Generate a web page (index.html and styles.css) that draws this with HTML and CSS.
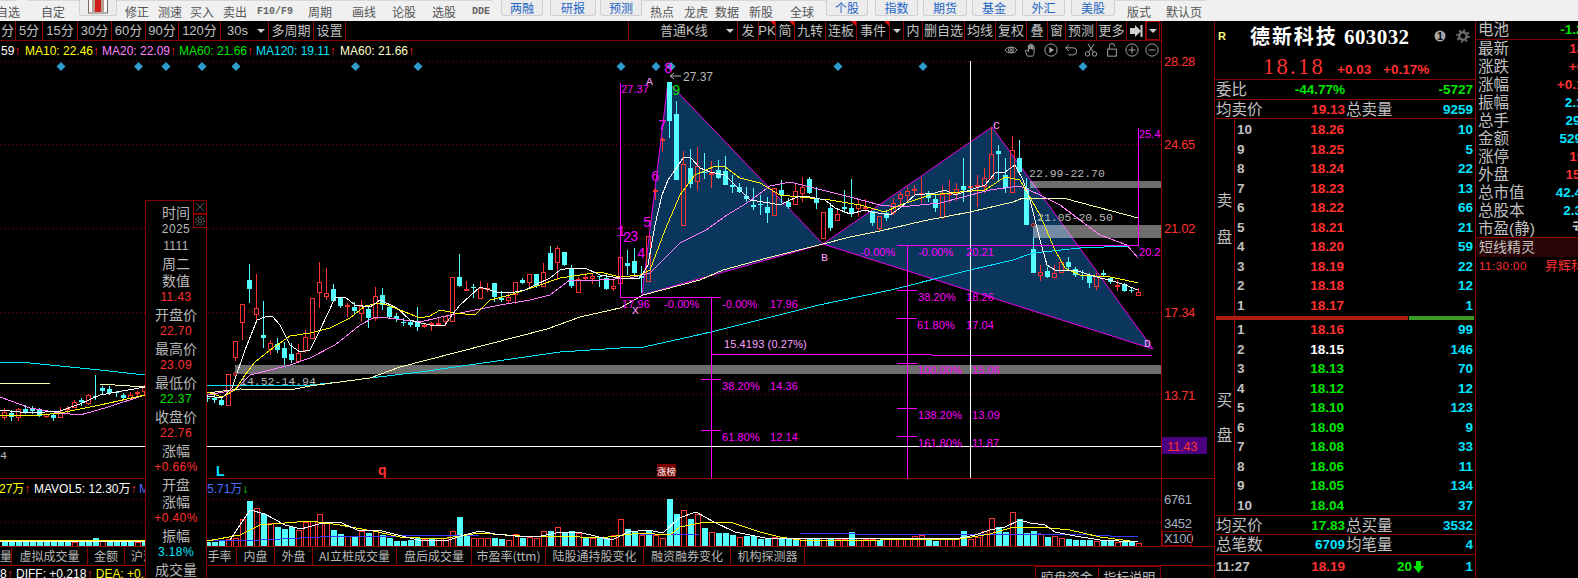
FILE: index.html
```html
<!DOCTYPE html>
<html lang="zh">
<head>
<meta charset="utf-8">
<title>德新科技 603032</title>
<link rel="stylesheet" href="styles.css">
</head>
<body>
<div class="app">
  <header class="topbar">
    <span class="ti">自选</span><i></i><span class="ti">自定</span>
    <span class="tb tb-icon"><svg width="20" height="14" viewBox="0 0 20 14"><rect x=".5" y="-2" width="19" height="15" fill="#fafafa" stroke="#7a6a60"/><rect x="4" y="-2" width="12" height="14" fill="#b8a090"/><rect x="7" y="-2" width="6" height="14" fill="#d0201c"/></svg></span>
    <span class="ti">修正</span><span class="ti">测速</span><span class="ti">买入</span><span class="ti">卖出</span><span class="ti ti-mono">F10/F9</span><span class="ti">周期</span><span class="ti">画线</span><span class="ti">论股</span><span class="ti">选股</span><span class="ti ti-mono">DDE</span><i></i>
    <span class="tb">两融</span><i></i><span class="tb">研报</span><i></i><span class="tb">预测</span>
    <span class="ti">热点</span><span class="ti">龙虎</span><span class="ti">数据</span><span class="ti">新股</span><span class="ti">全球</span>
    <span class="tb">个股</span><i></i><span class="tb">指数</span><i></i><span class="tb">期货</span><i></i><span class="tb">基金</span><i></i><span class="tb">外汇</span><i></i><span class="tb">美股</span>
    <span class="ti">版式</span><span class="ti">默认页</span>
  </header>

  <main class="main">
    <section class="chart">
      <nav class="periods">
        <span class="p">分</span><span class="p">5分</span><span class="p">15分</span><span class="p">30分</span><span class="p">60分</span><span class="p">90分</span><span class="p">120分</span>
        <span class="p p-drop">30s<b class="tri"></b></span><span class="p">多周期</span><span class="p">设置</span>
        <span class="p p-gap"></span>
        <span class="p p-drop p-kline">普通K线<b class="tri"></b></span>
        <span class="p">发</span><span class="p p-flag">PK</span><span class="p p-flag">简</span><span class="p">九转</span><span class="p p-flag">连板</span><span class="p p-flag">事件</span><span class="p"><b class="tri tri-solo"></b></span>
        <span class="p">内</span><span class="p">删自选</span><span class="p">均线</span><span class="p">复权</span><span class="p">叠</span><span class="p">窗</span><span class="p">预测</span><span class="p">更多</span>
        <span class="p"><svg width="14" height="12" viewBox="0 0 14 12"><path d="M1 3h5V0l6 6-6 6V9H1z" fill="#d0d0d0"/><rect x="11.5" y="0" width="2" height="12" fill="#d0d0d0"/></svg></span>
        <span class="p p-boxed"><b class="tri tri-solo"></b></span>
      </nav>

      <div class="legend">
        <div class="ma">
          <span class="c-white">59<b class="up">↑</b></span>
          <span class="c-yellow m1">MA10: 22.46<b class="up">↑</b></span>
          <span class="c-pink">MA20: 22.09<b class="up">↑</b></span>
          <span class="c-lime">MA60: 21.66<b class="up">↑</b></span>
          <span class="c-cyan">MA120: 19.11<b class="up">↑</b></span>
          <span class="c-cream">MA60: 21.66<b class="up">↑</b></span>
        </div>
        <div class="tools">
          <svg viewBox="0 0 16 16"><path d="M1 8c3-4.500 11-4.500 14 0-3 4.500-11 4.500-14 0z"/><circle cx="8" cy="8" r="2.800"/><circle cx="8" cy="8" r="1"/></svg>
          <svg viewBox="0 0 16 16"><path d="M4 15 1.500 9.500c-.5-1.500 1-2 2-.8L5 10V3c0-1.200 1.600-1.200 1.600 0v4V1.800c0-1.200 1.700-1.200 1.700 0V7 2.500c0-1.200 1.700-1.200 1.700 0V7.500 4c0-1.200 1.600-1.200 1.600 0v7c0 2-1 3-1.500 4z"/></svg>
          <svg viewBox="0 0 16 16"><circle cx="8" cy="8" r="7"/><path class="fill" d="M6 4.500 11.500 8 6 11.500z"/></svg>
          <svg viewBox="0 0 16 16"><path d="M5.500 2 2 5.500 5.500 9M2 5.500h8.500a4 4 0 0 1 0 8H5"/></svg>
          <svg viewBox="0 0 16 16"><circle cx="4" cy="12.500" r="2.500"/><circle cx="12" cy="12.500" r="2.500"/><path d="M5.300 10.500 11.500 1M10.700 10.500 4.500 1"/></svg>
          <svg viewBox="0 0 16 16"><rect x="3" y="7" width="10" height="8"/><path d="M5 7V3.500a3 3 0 0 1 6 0V4"/></svg>
          <svg viewBox="0 0 16 16"><circle cx="8" cy="8" r="7"/><path d="M4 8h8M8 4v8"/></svg>
          <svg viewBox="0 0 16 16"><circle cx="8" cy="8" r="7"/><path d="M4 8h8"/></svg>
        </div>
      </div>

      <svg class="plot" width="1214" height="485" viewBox="0 61 1214 485">
        <g id="grid"></g>
        <path class="pattern" d="M642 295 668 82 823 244ZM823 244 992 127 1153 349Z"/>
        <rect class="band" x="1030" y="181" width="131" height="7"/>
        <rect class="band" x="1033" y="225" width="128" height="13"/>
        <rect class="band" x="235" y="365" width="926" height="9"/>
        <g id="candles"></g>
        <g id="lines"></g>
        <path class="mag" d="M620.500 83V297.500H721M711.500 297V478M701 379.500H721M701 430.500H721M711 354.500H932M932 355.500H1152M907.500 245V478M897 245.500H1138V127.500M897 290.500H917M897 318.500H917M897 363.500H917M897 408.500H917M897 436.500H917"/>
        <path class="white" d="M970.500 61V478M0 446.500H1161"/>
        <path class="rule" d="M0 478.500H1214M1161.500 61V546"/>
        <rect class="now" x="1162" y="437" width="45" height="17"/>
        <g class="t-fib t-mag">
          <text x="621" y="93">27.37</text><text x="622" y="308">17.96</text><text x="664" y="308">-0.00%</text>
          <text x="722" y="308">-0.00%</text><text x="770" y="308">17.96</text>
          <text x="722" y="390">38.20%</text><text x="770" y="390">14.36</text>
          <text x="722" y="441">61.80%</text><text x="770" y="441">12.14</text>
          <text x="860" y="256">-0.00%</text><text x="918" y="256">-0.00%</text><text x="966" y="256">20.21</text>
          <text x="918" y="301">38.20%</text><text x="966" y="301">18.26</text>
          <text x="917" y="329">61.80%</text><text x="966" y="329">17.04</text>
          <text x="918" y="374">100.00%</text><text x="972" y="374">15.06</text>
          <text x="918" y="419">138.20%</text><text x="972" y="419">13.09</text>
          <text x="918" y="447">161.80%</text><text x="972" y="447">11.87</text>
          <text x="1139" y="138">25.4</text><text x="1139" y="256">20.2</text>
        </g>
        <g class="t-mono t-mag t-big">
          <text x="617" y="236">1</text><text x="623" y="242">2</text><text x="630" y="241">3</text><text x="637" y="258">4</text><text x="643" y="227">5</text><text x="651" y="181">6</text><text x="658" y="130">7</text><text x="664" y="73">8</text>
        </g>
        <text class="t-mono t-big t-green" x="672" y="95">9</text>
        <g class="t-mono t-pink">
          <text x="646" y="85">A</text><text x="821" y="261">B</text><text x="993" y="129">C</text><text x="1144" y="347">D</text><text x="632" y="314">X</text>
        </g>
        <text class="t-fib t-pink" x="724" y="348">15.4193 (0.27%)</text>
        <g class="t-mono t-grey">
          <text x="1029" y="177">22.99-22.70</text><text x="1037" y="221">21.05-20.50</text><text x="240" y="385">14.52-14.94</text><text x="0" y="459">4</text>
        </g>
        <path class="grey-line" d="M670 76H681M670 76l4-3M670 76l4 3"/>
        <text class="t-sans t-grey" x="683" y="81">27.37</text>
        <text class="t-letter t-cyan" x="216" y="476">L</text>
        <text class="t-letter t-red" x="378" y="475">q</text>
        <rect class="tag" x="657" y="464" width="19" height="13"/>
        <text class="t-tag" x="657" y="474.500">涨榜</text>
        <circle class="dot" cx="235" cy="374" r="1.500"/><circle class="dot" cx="1033" cy="225" r="1.500"/>
        <g class="t-axis t-red">
          <text x="1164" y="66">28.28</text><text x="1164" y="149">24.65</text><text x="1164" y="233">21.02</text><text x="1164" y="317">17.34</text><text x="1164" y="400">13.71</text><text x="1167" y="451">11.43</text>
        </g>
        <g class="t-axis t-steel">
          <text x="1164" y="504">6761</text><text x="1164" y="528">3452</text><text x="1164" y="543">X100</text>
        </g>
        <rect class="xbox" x="1162.500" y="531.500" width="29" height="14"/>
        <g class="t-sans">
          <text class="t-yellow" x="-1" y="493">27万<tspan class="t-red">↑</tspan></text>
          <text class="t-white" x="34" y="493">MAVOL5: 12.30万<tspan class="t-red">↑</tspan></text>
          <text class="t-blue" x="139" y="493">M</text>
          <text class="t-blue" x="207" y="493">5.71万<tspan class="t-green">↓</tspan></text>
        </g>
      </svg>

      <nav class="subtabs">
        <span>量</span><span>虚拟成交量</span><span>金额</span><span>沪深成交量</span><span>换手率</span><span>内盘</span><span>外盘</span><span>AI立桩成交量</span><span>盘后成交量</span><span>市盈率(ttm)</span><span>陆股通持股变化</span><span>融资融券变化</span><span>机构探测器</span>
      </nav>

      <div class="macd">
        <div class="macd-l"><span class="c-white">8<b class="up">↑</b> DIFF: +0.218<b class="up">↑</b></span> <span class="c-yellow">DEA: +0.1</span></div>
        <div class="macd-tabs"><span>晾盘资金</span><span>指标说明</span></div>
      </div>

      <aside class="tip">
        <span class="tip-x"><svg viewBox="0 0 13 13"><path d="M2 2 11 11M11 2 2 11"/></svg></span>
        <span class="tip-g"><svg viewBox="0 0 13 13"><circle cx="6.500" cy="6.500" r="2"/><circle class="dash" cx="6.500" cy="6.500" r="4.500"/></svg></span>
        <div>时间</div><div class="n">2025</div><div class="n">1111</div><div>周二</div><div>数值</div><div class="n c-red">11.43</div>
        <div>开盘价</div><div class="n c-red">22.70</div><div>最高价</div><div class="n c-red">23.09</div><div>最低价</div><div class="n c-lime">22.37</div>
        <div>收盘价</div><div class="n c-red">22.76</div><div>涨幅</div><div class="n c-red">+0.66%</div><div>开盘</div><div>涨幅</div><div class="n c-red">+0.40%</div>
        <div>振幅</div><div class="n c-cyan">3.18%</div><div>成交量</div>
      </aside>
    </section>

    <section class="quote">
      <div class="q-head">
        <div class="q-title">
          <b class="q-r">R</b><h1>德新科技 <em>603032</em></h1>
          <svg class="q-i" width="40" height="14" viewBox="0 0 40 14"><circle cx="6" cy="7" r="5.500" fill="#a8a8a8"/><text class="q-one" x="6" y="10.500">1</text><circle cx="29" cy="7" r="3.800" fill="none" stroke="#6a6a6a" stroke-width="2.600"/><circle cx="29" cy="7" r="5.800" fill="none" stroke="#6a6a6a" stroke-width="2" stroke-dasharray="2 2.500"/></svg>
        </div>
        <div class="q-price"><strong>18.18</strong><span>+0.03</span><span>+0.17%</span></div>
      </div>
      <div class="sum sum-a"><span class="lab">委比</span><span class="v c-lime">-44.77%</span><span></span><span class="v c-lime">-5727</span></div>
      <div class="sum sum-b"><span class="lab">均卖价</span><span class="v c-red">19.13</span><span class="lab">总卖量</span><span class="v c-cyan">9259</span></div>
      <div class="book book-sell">
        <div class="book-l"><span>卖</span><span>盘</span></div>
        <div class="levels">
          <div class="lv"><span class="g">10</span><span class="c-red">18.26</span><span class="c-cyan">10</span></div>
          <div class="lv"><span class="g">9</span><span class="c-red">18.25</span><span class="c-cyan">5</span></div>
          <div class="lv"><span class="g">8</span><span class="c-red">18.24</span><span class="c-cyan">22</span></div>
          <div class="lv"><span class="g">7</span><span class="c-red">18.23</span><span class="c-cyan">13</span></div>
          <div class="lv"><span class="g">6</span><span class="c-red">18.22</span><span class="c-cyan">66</span></div>
          <div class="lv"><span class="g">5</span><span class="c-red">18.21</span><span class="c-cyan">21</span></div>
          <div class="lv"><span class="g">4</span><span class="c-red">18.20</span><span class="c-cyan">59</span></div>
          <div class="lv"><span class="g">3</span><span class="c-red">18.19</span><span class="c-cyan">22</span></div>
          <div class="lv"><span class="g">2</span><span class="c-red">18.18</span><span class="c-cyan">12</span></div>
          <div class="lv"><span class="g">1</span><span class="c-red">18.17</span><span class="c-cyan">1</span></div>
        </div>
      </div>
      <div class="ratio"><span class="ratio-r"></span><span class="ratio-g"></span></div>
      <div class="book book-buy">
        <div class="book-l"><span>买</span><span>盘</span></div>
        <div class="levels">
          <div class="lv"><span class="g">1</span><span class="c-red">18.16</span><span class="c-cyan">99</span></div>
          <div class="lv"><span class="g">2</span><span class="c-white">18.15</span><span class="c-cyan">146</span></div>
          <div class="lv"><span class="g">3</span><span class="c-lime">18.13</span><span class="c-cyan">70</span></div>
          <div class="lv"><span class="g">4</span><span class="c-lime">18.12</span><span class="c-cyan">12</span></div>
          <div class="lv"><span class="g">5</span><span class="c-lime">18.10</span><span class="c-cyan">123</span></div>
          <div class="lv"><span class="g">6</span><span class="c-lime">18.09</span><span class="c-cyan">9</span></div>
          <div class="lv"><span class="g">7</span><span class="c-lime">18.08</span><span class="c-cyan">33</span></div>
          <div class="lv"><span class="g">8</span><span class="c-lime">18.06</span><span class="c-cyan">11</span></div>
          <div class="lv"><span class="g">9</span><span class="c-lime">18.05</span><span class="c-cyan">134</span></div>
          <div class="lv"><span class="g">10</span><span class="c-lime">18.04</span><span class="c-cyan">37</span></div>
        </div>
      </div>
      <div class="sum sum-b"><span class="lab">均买价</span><span class="v c-lime">17.83</span><span class="lab">总买量</span><span class="v c-cyan">3532</span></div>
      <div class="sum sum-c"><span class="lab">总笔数</span><span class="v c-cyan">6709</span><span class="lab">均笔量</span><span class="v c-cyan">4</span></div>
      <div class="tick">
        <span class="g">11:27</span><span class="c-red">18.19</span>
        <span class="c-lime tick-v">20<svg width="11" height="12" viewBox="0 0 11 12"><path d="M3 0h5v5h3l-5.500 7L0 5h3z" fill="#00e600"/></svg></span>
        <span class="c-cyan">1</span>
      </div>
    </section>

    <section class="side">
      <div class="s-top"><span class="lab">电池</span><span class="v c-lime">-1.23%</span></div>
      <div class="s-list">
        <div class="s-row"><span class="lab">最新</span><span class="v c-red">18.18</span></div>
        <div class="s-row"><span class="lab">涨跌</span><span class="v c-red">+0.03</span></div>
        <div class="s-row"><span class="lab">涨幅</span><span class="v c-red">+0.17%</span></div>
        <div class="s-row"><span class="lab">振幅</span><span class="v c-cyan">2.12%</span></div>
        <div class="s-row"><span class="lab">总手</span><span class="v c-cyan">29201</span></div>
        <div class="s-row"><span class="lab">金额</span><span class="v c-cyan">5291万</span></div>
        <div class="s-row"><span class="lab">涨停</span><span class="v c-red">19.97</span></div>
        <div class="s-row"><span class="lab">外盘</span><span class="v c-red">15120</span></div>
        <div class="s-row"><span class="lab">总市值</span><span class="v c-cyan">42.45亿</span></div>
        <div class="s-row"><span class="lab">总股本</span><span class="v c-cyan">2.33亿</span></div>
        <div class="s-row"><span class="lab">市盈(静)</span><span class="v g">亏损</span></div>
      </div>
      <div class="s-band">短线精灵</div>
      <div class="s-feed"><span>11:30:00</span><span>昇辉科技</span></div>
    </section>
  </main>
</div>
<script src="chart.js"></script>
</body>
</html>
```
FILE: styles.css
```css
* { box-sizing: border-box; }
html, body { margin: 0; padding: 0; background: #000; }
body {
  width: 1578px; height: 578px; overflow: hidden;
  font-family: "Noto Sans CJK SC", "Liberation Sans", sans-serif;
  color: #c0c0c0;
}
.app { width: 1578px; height: 578px; display: flex; flex-direction: column; }

/* top toolbar */
.topbar {
  height: 21px; flex: none; background: #f0f0f0;
  display: grid; align-items: start;
  grid-template-columns: 16px 11px 52px 38px 40px 26px 38px 28px 52px 38px 50px 30px 50px 24px 8px 42px 7px 46px 4px 42px 40px 28px 34px 34px 48px 42px 7px 43px 5px 44px 5px 44px 6px 43px 6px 44px 48px 42px;
}
.ti {
  height: 21px; display: flex; align-items: center; justify-content: center; white-space: nowrap;
  font-size: 12px; color: #555; padding-top: 2px; box-shadow: inset 0 1px #d8d8d8;
}
.ti-mono { font-family: "Liberation Mono", monospace; font-size: 10px; font-weight: bold; color: #666; }
.tb {
  height: 16px; display: flex; align-items: center; justify-content: center;
  font-size: 12px; color: #1e66c4;
  background: #ececec; border: 1px solid #cfcfcf; border-top: 0; border-radius: 0 0 3px 3px;
}
.tb-icon { overflow: hidden; align-items: flex-start; }

/* period bar */
.chart { width: 1214px; flex: none; position: relative; display: flex; flex-direction: column; height: 557px; }
.main { flex: 1; display: flex; min-height: 0; }
.periods {
  width: 1162px; height: 20px; flex: none; border-bottom: 1px solid #8b0000; border-right: 1px solid #8b0000;
  display: grid; align-items: stretch;
  grid-template-columns: 16px 27px 35px 34px 34px 33px 42px 48px 45px 32px 283px 109px 21px 17px 19px 31px 31px 33px 14px 19px 42px 31px 31px 21px 18px 31px 30px 19px 14px;
}
.p {
  position: relative; display: flex; align-items: center; justify-content: center; white-space: nowrap;
  border-right: 1px solid #8b0000; font-size: 13px; line-height: 1; color: #c0c0c0;
  font-family: "Liberation Sans", "Noto Sans CJK SC", sans-serif;
}
.p-drop { justify-content: flex-start; padding-left: 6px; }
.p-kline { padding-left: 31px; }
.tri {
  position: absolute; right: 3px; top: 8px; width: 0; height: 0;
  border: 4px solid transparent; border-top: 4px solid #d0d0d0; border-bottom: 0;
}
.tri-solo { position: static; }
.p-flag::after {
  content: ""; position: absolute; right: 0; top: 0; width: 0; height: 0;
  border-top: 5px solid #e01010; border-left: 5px solid transparent;
}
.p-boxed { border: 1px solid #a00000; }

/* legend */
.legend {
  width: 1162px; height: 20px; flex: none; border-right: 1px solid #8b0000;
  display: flex; align-items: center; justify-content: space-between;
}
.ma { display: flex; font: 12px/20px "Liberation Sans", sans-serif; white-space: nowrap; padding-left: 1px; gap: 0; }
.ma span { display: inline-block; }
.ma span:nth-child(1) { width: 24px; }
.ma span:nth-child(2) { width: 77px; }
.ma span:nth-child(3) { width: 77px; }
.ma span:nth-child(4) { width: 77px; }
.ma span:nth-child(5) { width: 84px; }
.up { color: #ff2020; font-weight: normal; }
.tools { display: flex; gap: 6.2px; padding-right: 2px; margin-top: -2px; }
.tools svg { width: 14px; height: 14px; fill: none; stroke: #a8a8a8; stroke-width: 1.1; }
.tools svg .fill { fill: #a8a8a8; stroke: none; }

/* plot */
.plot { display: block; flex: none; overflow: visible; }
.plot text { white-space: pre; }
.pattern { fill: #0a365e; stroke: #f000f0; stroke-width: 1; }
.band { fill: rgba(255, 255, 255, .43); }
.mag { fill: none; stroke: #f0f; stroke-width: 1; shape-rendering: crispEdges; }
.white { fill: none; stroke: #fff; stroke-width: 1; shape-rendering: crispEdges; }
.rule { fill: none; stroke: #8b0000; stroke-width: 1; shape-rendering: crispEdges; }
.grid-dot { fill: none; stroke: #900000; stroke-width: 1; stroke-dasharray: 1 3; shape-rendering: crispEdges; }
.now { fill: #4b0082; }
.grey-line { fill: none; stroke: #b0b0b0; stroke-width: 1; }
.tag { fill: #7a0000; }
.t-tag { font: 9.500px "Noto Sans CJK SC", sans-serif; fill: #fff; }
.dot { fill: #300; stroke: #e05050; stroke-width: 1; }
.xbox { fill: none; stroke: #8b0000; }
.t-mono text, .t-mono { font: 11.5px "Liberation Mono", monospace; }
.t-big text, .t-big { font-size: 14px; }
.t-fib text, .t-fib { font: 11px "Liberation Sans", sans-serif; letter-spacing: .1px; }
.t-sans text, .t-sans { font: 12px "Liberation Sans", "Noto Sans CJK SC", sans-serif; }
.t-axis text { font: 13px "Liberation Sans", sans-serif; letter-spacing: -.3px; }
.t-letter { font: bold 14px "Liberation Sans", sans-serif; }
.t-mag { fill: #f0f; }
.t-pink { fill: #ffa0ff; }
.t-grey { fill: #b8b8b8; }
.t-green { fill: #00e000; }
.t-cyan { fill: #00e5ff; }
.t-red { fill: #ff3030; }
.t-steel { fill: #a8b0c0; }
.t-yellow { fill: #ffff00; }
.t-white { fill: #fff; }
.t-blue { fill: #4a70ff; }

/* sub tabs */
.subtabs {
  width: 1214px; height: 20px; flex: none;
  border-top: 1px solid #8b0000; border-bottom: 1px solid #8b0000;
  display: grid; grid-template-columns: 12px 76px 37px 66px 46px 38px 38px 84px 75px 74px 98px 87px 74px;
  font-size: 12px; line-height: 18px; color: #b8b8b8;
}
.subtabs span { display: block; text-align: center; border-right: 1px solid #8b0000; white-space: nowrap; }
.subtabs span:first-child { text-align: right; overflow: hidden; }
.subtabs span:nth-child(4) { text-align: left; padding-left: 6px; overflow: hidden; }
.macd { width: 1214px; height: 12px; flex: none; display: flex; justify-content: space-between; overflow: hidden; }
.macd-l { font: 12px/17px "Liberation Sans", sans-serif; white-space: pre; }
.macd-tabs { display: flex; width: 126px; margin-right: 53px; font-size: 13px; line-height: 20px; }
.macd-tabs span { flex: 1; text-align: center; border: 1px solid #8b0000; height: 20px; }
.macd-tabs span + span { border-left: 0; }

/* tooltip */
.tip {
  position: absolute; left: 145px; top: 179px; width: 62px; height: 390px;
  background: #000; border: 1px solid #8b0000; padding-top: 3px;
  font-size: 14px; line-height: 17px; text-align: center; color: #b8b8b8;
}
.tip div { height: 17px; white-space: nowrap; }
.tip .n { font: 12px/17px "Liberation Sans", sans-serif; letter-spacing: .4px; }
.tip-x, .tip-g {
  position: absolute; right: -1px; width: 14px; height: 14px; border: 1px solid #8b0000;
}
.tip-x { top: -1px; }
.tip-g { top: 13px; }
.tip-x svg, .tip-g svg { display: block; width: 12px; height: 12px; fill: none; stroke: #666; }
.tip-g .dash { stroke-dasharray: 1.500 1.500; stroke-width: 1.500; }

/* colours */
.c-white { color: #fff; }
.c-yellow { color: #ffff00; }
.c-pink { color: #ff80ff; }
.c-lime { color: #00e600; }
.c-cyan { color: #00e5ff; }
.c-cream { color: #ffffc8; }
.c-red { color: #ff3030; }
.g { color: #c0c0c0; }

/* quote */
.quote {
  width: 262px; flex: none; border-left: 1px solid #8b0000; border-right: 1px solid #8b0000;
  display: flex; flex-direction: column;
  font: bold 13.5px/19px "Liberation Sans", "Noto Sans CJK SC", sans-serif;
}
.q-head { height: 59px; flex: none; border-bottom: 1px solid #8b0000; }
.q-title { height: 30px; display: flex; align-items: center; position: relative; }
.q-r { width: 35px; padding-left: 3px; color: #ffff80; font-size: 11px; }
.q-title h1 { margin: 0; font: bold 20px/28px "Noto Sans CJK SC", serif; letter-spacing: 1.900px; color: #fff; white-space: nowrap; }
.q-title h1 em { font: bold 21px/28px "Liberation Serif", serif; letter-spacing: .4px; }
.q-i { margin-left: 25px; }
.q-one { font: bold 10px "Liberation Sans", sans-serif; fill: #000; text-anchor: middle; }
.q-price { display: flex; align-items: baseline; color: #ff3030; padding-left: 48px; margin-top: 2px; }
.q-price strong { font: 22.5px/28px "Liberation Serif", serif; letter-spacing: 2.300px; width: 74px; }
.q-price span { width: 46px; }
.sum {
  display: grid; grid-template-columns: 129px auto 1fr; padding: 0 2px 0 1px; flex: none; align-items: center;
  border-bottom: 1px solid #8b0000; position: relative;
}
.sum .lab { font-weight: normal; font-size: 15.500px; line-height: 18px; color: #c0c0c0; white-space: nowrap; }
.sum .v { text-align: right; }
.sum > :nth-child(1) { grid-column: 1; grid-row: 1; }
.sum > :nth-child(2) { grid-column: 1; grid-row: 1; }
.sum > :nth-child(3) { grid-column: 2; grid-row: 1; padding-left: 1px; }
.sum > :nth-child(4) { grid-column: 3; grid-row: 1; }
.sum-a { height: 20px; }
.sum-b { height: 19px; }
.sum-c { height: 20px; }
.book { display: flex; flex: none; }
.book-sell { height: 197px; }
.book-buy { height: 196px; border-bottom: 1px solid #8b0000; }
.book-l {
  width: 20px; flex: none; border-right: 1px solid #8b0000; display: flex; flex-direction: column;
  align-items: center; justify-content: center; font-weight: normal; font-size: 15.500px; color: #c0c0c0;
}
.book-sell .book-l { line-height: 37px; padding-top: 2px; }
.book-buy .book-l { line-height: 35px; }
.levels { flex: 1; display: grid; grid-auto-rows: 19.500px; align-content: start; }
.book-sell .levels { padding-top: 1px; }
.lv { display: grid; grid-template-columns: 35px 74px 1fr; padding-right: 2px; align-items: center; line-height: 19px; }
.lv > :nth-child(1) { padding-left: 2px; }
.lv > :nth-child(2), .lv > :nth-child(3) { text-align: right; }
.ratio { height: 4px; flex: none; display: flex; gap: 1px; padding: 0 1px; }
.ratio-r { flex: 193; background: #b01c14; }
.ratio-g { flex: 65; background: #3a9a28; }
.tick { flex: 1; display: grid; grid-template-columns: 129px 79px 1fr; padding: 0 2px 0 1px; align-items: center; position: relative; }
.tick > :nth-child(1), .tick > :nth-child(2) { grid-column: 1; grid-row: 1; }
.tick > :nth-child(2) { text-align: right; }
.tick > :nth-child(3) { grid-column: 2; grid-row: 1; display: flex; justify-content: flex-end; align-items: center; gap: 1px; }
.tick > :nth-child(4) { grid-column: 3; grid-row: 1; text-align: right; }

/* side */
.side { flex: 1; min-width: 0; overflow: hidden; font: bold 13.5px/18px "Liberation Sans", "Noto Sans CJK SC", sans-serif; }
.s-top, .s-row { width: 127px; display: flex; justify-content: space-between; padding-left: 2px; white-space: nowrap; }
.s-top { height: 19px; border-bottom: 1px solid #8b0000; width: 102px; }
.s-top .v { margin-right: -25px; }
.s-list { height: 198px; border-bottom: 1px solid #8b0000; }
.s-row { height: 18px; }
.s-row .g { margin-right: 4px; }
.side .lab { font-weight: normal; font-size: 15.500px; color: #c0c0c0; }
.s-band { height: 19px; background: #2a0506; font-size: 14px; font-weight: normal; line-height: 19px; padding-left: 3px; color: #c0c0c0; }
.s-feed { display: flex; width: 140px; padding: 0 0 0 3px; font-weight: normal; color: #ff3030; font-size: 13px; line-height: 18px; white-space: nowrap; gap: 18px; }
.s-feed span:first-child { font: 11.500px/18px "Liberation Sans", sans-serif; letter-spacing: .5px; }
```
FILE: chart.js
```js
// [x, high, bodyTop, bodyBottom, low, type]  r = rising (hollow red), c = falling (solid cyan)
var K = [
[4,408,412,417,420,'r'],[11,410,413,417,421,'c'],[18,408,409,417,421,'r'],[25,405,409,412,414,'c'],[32,406,409,411,414,'c'],[39,408,410,416,417,'c'],[46,413,414,416,418,'r'],[53,414,415,418,421,'c'],[60,407,412,417,418,'r'],[67,406,408,409,413,'r'],[74,400,402,407,408,'r'],[81,398,400,402,406,'c'],[88,394,395,403,405,'r'],[95,375,396,397,400,'c'],[102,386,388,391,394,'c'],[109,386,389,393,395,'c'],[116,391,392,393,397,'c'],[123,393,395,398,399,'c'],[130,392,395,398,400,'r'],[137,391,392,393,398,'r'],[144,385,387,391,395,'r'],
[207,395,398,399,402,'c'],[214,394,398,400,403,'c'],[221,398,400,405,406,'c'],[228,374,374,405,405,'r'],[235,341,341,357,361,'r'],[242,304,304,322,340,'r'],[249,264,280,289,303,'c'],[256,274,308,314,323,'r'],[263,301,335,338,348,'c'],[270,340,343,349,355,'r'],[277,338,344,350,353,'c'],[284,342,348,358,365,'c'],[291,343,354,360,363,'c'],[298,344,353,361,361,'r'],[305,330,337,350,353,'r'],[312,298,298,338,338,'r'],[319,262,282,292,308,'r'],[326,268,293,296,300,'r'],[333,284,289,301,302,'c'],[340,297,297,306,308,'c'],[347,303,305,306,317,'r'],[354,302,307,311,315,'c'],[361,300,306,313,322,'r'],[368,305,309,318,328,'c'],[375,287,296,318,321,'r'],[382,288,295,305,310,'c'],[389,305,307,317,319,'c'],[396,313,316,319,322,'c'],[403,318,322,323,326,'c'],[410,320,322,325,327,'c'],[417,307,321,327,331,'c'],[424,323,325,326,328,'r'],[431,322,323,324,331,'r'],[438,317,323,324,324,'r'],[445,316,316,321,326,'r'],[452,277,277,321,321,'r'],[459,254,277,286,287,'c'],[466,281,289,290,290,'r'],[473,284,287,288,298,'c'],[480,281,288,298,299,'r'],[487,283,288,289,292,'r'],[494,283,283,297,302,'c'],[501,291,298,300,302,'c'],[508,292,297,300,304,'r'],[515,282,282,294,304,'r'],[522,278,280,283,284,'c'],[529,274,274,282,287,'r'],[536,274,274,286,288,'c'],[543,263,272,286,287,'r'],[550,246,253,270,270,'c'],[557,246,248,262,280,'r'],[564,252,252,265,266,'c'],[571,265,268,286,288,'c'],[578,277,279,292,292,'r'],[585,273,277,278,280,'r'],[592,273,276,278,284,'r'],[599,276,276,277,287,'c'],[606,273,278,289,290,'c'],[613,280,286,288,291,'r'],[620,257,257,283,283,'r'],[627,250,263,266,275,'c'],[634,248,261,273,275,'c'],[641,266,276,278,293,'c'],[648,236,236,281,281,'r'],[655,188,190,190,200,'r'],[662,137,139,140,152,'r'],[669,82,82,121,138,'c'],[676,101,114,180,180,'c'],[683,151,164,225,225,'r'],[690,149,168,184,188,'c'],[697,147,166,181,190,'r'],[704,153,172,173,179,'c'],[711,161,173,174,188,'r'],[718,160,170,178,179,'c'],[725,156,171,185,185,'c'],[732,175,185,187,193,'c'],[739,183,187,192,193,'c'],[746,187,196,199,202,'c'],[753,188,205,207,210,'c'],[760,195,204,205,215,'c'],[767,197,207,213,223,'c'],[774,188,188,215,215,'r'],[781,180,190,195,203,'c'],[788,198,202,207,209,'c'],[795,183,191,204,204,'r'],[802,177,187,193,202,'r'],[809,177,179,193,194,'c'],[816,187,198,203,209,'c'],[823,212,212,238,238,'r'],[830,203,208,228,231,'c'],[837,210,214,220,221,'r'],[844,190,207,209,213,'c'],[851,179,208,213,217,'c'],[858,199,204,208,217,'r'],[865,199,207,208,212,'r'],[872,211,211,223,226,'c'],[879,216,216,228,232,'r'],[886,210,213,218,221,'c'],[893,198,203,212,215,'r'],[900,192,194,198,208,'r'],[907,187,191,195,203,'r'],[914,185,189,190,196,'r'],[921,177,193,194,203,'r'],[928,191,193,198,202,'c'],[935,195,199,208,212,'c'],[942,186,194,217,219,'r'],[949,180,193,194,203,'r'],[956,183,189,193,201,'r'],[963,158,186,190,202,'c'],[970,178,186,187,200,'r'],[977,175,185,186,207,'r'],[984,168,178,186,193,'r'],[991,127,154,178,179,'r'],[998,145,151,154,182,'c'],[1005,158,175,188,193,'c'],[1012,136,150,192,192,'r'],[1019,140,158,172,175,'c'],[1026,178,188,225,225,'c'],[1033,237,249,273,273,'c'],[1040,265,272,275,281,'r'],[1047,267,271,277,278,'c'],[1054,265,273,277,278,'r'],[1061,262,262,272,272,'r'],[1068,257,262,267,269,'c'],[1075,267,269,275,277,'c'],[1082,270,275,276,280,'c'],[1089,273,276,283,288,'c'],[1096,273,276,286,290,'r'],[1103,270,273,275,276,'c'],[1110,277,278,282,284,'c'],[1117,280,285,286,291,'r'],[1124,283,284,291,292,'c'],[1131,287,290,291,293,'c'],[1138,288,292,295,295,'r']
];

var LINES = {
  white: [[0,410],[30,413],[60,411],[80,404],[100,395],[145,387],[207,396],[222,398],[232,388],[245,350],[257,320],[265,317],[272,316],[280,325],[290,345],[300,352],[310,350],[320,330],[335,298],[345,297],[355,305],[370,307],[380,300],[397,308],[410,320],[417,322],[430,325],[445,325],[452,315],[460,305],[480,287],[490,290],[500,293],[515,292],[525,290],[535,285],[550,278],[560,270],[570,268],[585,268],[600,275],[620,278],[640,278],[648,265],[655,225],[662,195],[668,180],[675,170],[683,158],[690,157],[700,168],[710,172],[725,175],[740,190],[750,200],[770,203],[780,205],[790,200],[800,196],[810,197],[825,200],[835,208],[850,214],[865,210],[872,212],[890,215],[900,208],[915,195],[935,193],[945,190],[955,195],[970,190],[985,185],[995,173],[1005,172],[1015,165],[1023,180],[1030,200],[1040,240],[1047,265],[1055,270],[1075,270],[1090,275],[1100,278],[1110,280],[1125,285],[1138,290]],
  yellow: [[0,415],[30,416],[60,413],[100,405],[145,395],[207,392],[222,397],[235,390],[245,375],[255,362],[270,350],[290,336],[310,333],[330,328],[350,318],[365,306],[380,303],[390,306],[400,310],[420,318],[430,316],[440,310],[455,313],[475,315],[490,300],[510,295],[540,285],[560,278],[580,275],[600,272],[620,277],[640,275],[650,270],[665,230],[680,195],[695,175],[715,166],[725,167],[740,178],[760,183],[780,195],[800,197],[830,200],[860,205],[885,212],[900,205],[930,195],[960,192],[985,190],[1005,177],[1020,180],[1040,215],[1055,250],[1065,268],[1080,275],[1110,277],[1125,280],[1138,283]],
  pink: [[0,397],[30,408],[60,413],[80,415],[105,408],[145,395],[207,395],[235,390],[250,375],[290,365],[310,358],[335,345],[360,325],[375,317],[388,318],[420,322],[450,315],[500,305],[530,300],[550,295],[570,280],[600,280],[630,278],[650,273],[665,258],[680,243],[706,230],[727,215],[747,203],[770,186],[790,182],[810,187],[850,197],[880,205],[900,207],[940,203],[990,190],[1020,186],[1040,195],[1060,205],[1080,220],[1100,235],[1127,245],[1138,258]],
  cream: [[0,383],[50,384],[100,384],[145,387],[207,393],[240,389],[290,390],[310,386],[340,382],[370,378],[400,367],[489,344],[547,329],[580,317],[620,308],[643,295],[700,280],[723,270],[767,258],[823,244],[850,237],[880,231],[923,221],[970,212],[1013,202],[1023,198],[1063,198],[1097,207],[1138,218]],
  cyan: [[0,362],[30,363],[100,370],[145,375],[207,385],[240,385],[310,385],[340,382],[370,378],[420,372],[560,352],[620,348],[644,347],[711,332],[819,305],[891,290],[970,270],[1013,260],[1033,253],[1080,248],[1128,246]]
};

var VOLS = [
[4,4,'c'],[11,5,'c'],[18,4,'c'],[25,5,'c'],[32,4,'c'],[39,5,'c'],[46,4,'c'],[53,5,'c'],[60,4,'c'],[67,5,'c'],[74,4,'r'],[81,5,'c'],[88,6,'c'],[95,8,'c'],[102,5,'r'],[109,5,'c'],[116,4,'c'],[123,5,'c'],[130,4,'c'],[137,4,'r'],[144,5,'c'],
[207,4,'c'],[214,4,'c'],[221,5,'c'],[228,7,'r'],[235,8,'r'],[242,27,'r'],[249,45,'c'],[256,38,'r'],[263,32,'c'],[270,23,'r'],[277,19,'c'],[284,17,'c'],[291,19,'c'],[298,16,'r'],[305,24,'r'],[312,25,'r'],[319,32,'r'],[326,23,'r'],[333,16,'c'],[340,12,'c'],[347,10,'r'],[354,10,'c'],[361,15,'r'],[368,13,'c'],[375,16,'r'],[382,11,'c'],[389,8,'c'],[396,5,'c'],[403,5,'c'],[410,6,'c'],[417,8,'c'],[424,7,'r'],[431,7,'c'],[438,8,'r'],[445,8,'r'],[452,15,'r'],[459,29,'c'],[466,10,'c'],[473,8,'r'],[480,8,'r'],[487,8,'r'],[494,8,'c'],[501,7,'c'],[508,6,'r'],[515,12,'r'],[522,8,'c'],[529,9,'r'],[536,8,'r'],[543,15,'r'],[550,15,'c'],[557,19,'r'],[564,13,'c'],[571,15,'c'],[578,13,'r'],[585,8,'c'],[592,8,'r'],[599,8,'c'],[606,8,'c'],[613,11,'r'],[620,27,'r'],[627,17,'c'],[634,14,'c'],[641,11,'r'],[648,15,'c'],[655,11,'r'],[662,8,'r'],[669,47,'c'],[676,32,'c'],[683,36,'r'],[690,27,'c'],[697,32,'r'],[704,18,'c'],[711,14,'r'],[718,13,'c'],[725,13,'c'],[732,11,'c'],[739,9,'r'],[746,10,'c'],[753,10,'c'],[760,7,'c'],[767,8,'c'],[774,9,'r'],[781,8,'c'],[788,8,'c'],[795,8,'c'],[802,8,'r'],[809,8,'c'],[816,7,'c'],[823,8,'r'],[830,7,'c'],[837,7,'r'],[844,7,'r'],[851,14,'c'],[858,8,'r'],[865,7,'r'],[872,7,'r'],[879,6,'c'],[886,7,'r'],[893,7,'r'],[900,7,'r'],[907,7,'r'],[914,10,'r'],[921,11,'r'],[928,7,'c'],[935,5,'c'],[942,7,'r'],[949,7,'r'],[956,7,'r'],[963,15,'c'],[970,7,'r'],[977,9,'r'],[984,15,'r'],[991,28,'r'],[998,19,'c'],[1005,14,'c'],[1012,34,'r'],[1019,27,'c'],[1026,13,'c'],[1033,15,'c'],[1040,12,'r'],[1047,9,'c'],[1054,10,'r'],[1061,8,'r'],[1068,7,'c'],[1075,6,'c'],[1082,6,'c'],[1089,6,'c'],[1096,5,'r'],[1103,5,'c'],[1110,5,'c'],[1117,4,'r'],[1124,4,'c'],[1131,4,'c'],[1138,3,'r']
];

var VLINES = {
  white: [[0,541],[145,541],[207,540],[230,540],[240,525],[250,510],[265,514],[285,525],[301,529],[319,524],[332,522],[342,523],[357,530],[378,530],[398,535],[418,540],[449,540],[464,535],[480,531],[495,534],[515,536],[541,536],[561,532],[582,533],[612,540],[628,532],[648,530],[663,533],[679,518],[696,512],[714,522],[735,532],[765,538],[800,538],[960,538],[975,535],[990,530],[1005,527],[1020,520],[1030,523],[1045,525],[1055,532],[1075,536],[1100,540],[1138,542]],
  yellow: [[0,540],[145,540],[207,541],[240,535],[260,525],[285,523],[310,521],[340,525],[378,532],[400,537],[440,539],[480,533],[520,536],[560,536],[600,538],[640,533],[670,535],[680,527],[700,523],[730,522],[760,532],[780,537],[800,540],[880,540],[960,539],[990,534],[1010,528],[1040,527],[1070,530],[1100,537],[1138,542]],
  blue: [[0,540],[207,540],[260,540],[320,537],[400,536],[480,535],[640,535],[700,534],[800,534],[830,533],[880,535],[1040,534],[1090,535],[1110,536],[1138,537]]
};

var COLORS = { white: '#fff', yellow: '#ffff00', pink: '#ff80ff', cream: '#ffffb0', cyan: '#00e5ff', blue: '#3838ff' };
var DIAMONDS = [61, 138.5, 166, 202, 236, 355.5, 418, 621, 656, 671, 838, 923, 1083];

function poly(points, color) {
  return '<polyline fill="none" stroke="' + color + '" stroke-width="1" shape-rendering="crispEdges" points="' + points.join(' ') + '"/>';
}

var grid = '';
[61.5, 144.5, 228.5, 312.5, 394.5, 499.5, 522.5].forEach(function (y) {
  grid += '<path class="grid-dot" d="M0 ' + y + 'H1161"/>';
});
DIAMONDS.forEach(function (x) {
  grid += '<path fill="#2e9ccc" d="M' + x + ' 62l4.500 4.500-4.500 4.500-4.500-4.500z"/>';
});
document.getElementById('grid').innerHTML = grid;

var out = '';
K.forEach(function (c) {
  var x = c[0] + 0.5, color = c[5] === 'r' ? '#ff3232' : '#54ffff';
  var wick = 'M' + x + ' ' + c[1] + 'V' + c[2] + 'M' + x + ' ' + c[3] + 'V' + c[4];
  out += '<path d="' + wick + '" stroke="' + color + '" shape-rendering="crispEdges"/>';
  var w = 4, h = Math.max(c[3] - c[2], 1);
  if (c[5] === 'r') {
    out += '<rect x="' + (x - 2) + '" y="' + (c[2] + .5) + '" width="' + w + '" height="' + h + '" fill="none" stroke="' + color + '" shape-rendering="crispEdges"/>';
  } else {
    out += '<rect x="' + (x - 2.5) + '" y="' + c[2] + '" width="5" height="' + h + '" fill="' + color + '"/>';
  }
});
VOLS.forEach(function (v) {
  var x = v[0], top = 546 - v[1];
  if (v[2] === 'r') {
    out += '<rect x="' + (x - 1.5) + '" y="' + (top + .5) + '" width="5" height="' + v[1] + '" fill="none" stroke="#ff3232" shape-rendering="crispEdges"/>';
  } else {
    out += '<rect x="' + (x - 2) + '" y="' + top + '" width="6" height="' + v[1] + '" fill="#54ffff"/>';
  }
});
document.getElementById('candles').innerHTML = out;

var ln = '';
['cyan', 'cream', 'pink', 'yellow', 'white'].forEach(function (n) { ln += poly(LINES[n], COLORS[n]); });
['blue', 'yellow', 'white'].forEach(function (n) { ln += poly(VLINES[n], COLORS[n]); });
document.getElementById('lines').innerHTML = ln;
```
